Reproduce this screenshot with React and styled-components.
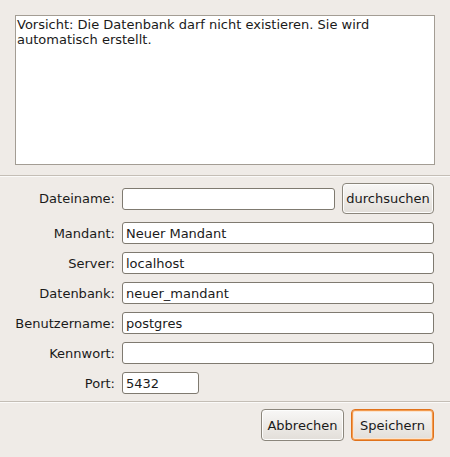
import React from 'react';
import styled, { createGlobalStyle } from 'styled-components';

const bg = '#efebe7';
const text = '#1a1a1a';

const GlobalStyle = createGlobalStyle`
  body {
    margin: 0;
    background: ${bg};
    font-family: "DejaVu Sans", "Liberation Sans", sans-serif;
    font-size: 13px;
    color: ${text};
  }
`;

const fields = [
  { label: 'Mandant:', value: 'Neuer Mandant' },
  { label: 'Server:', value: 'localhost' },
  { label: 'Datenbank:', value: 'neuer_mandant' },
  { label: 'Benutzername:', value: 'postgres' },
  { label: 'Kennwort:', value: '', type: 'password' },
  { label: 'Port:', value: '5432', short: true },
];

const App = () => {
  return (
    <Dialog>
      <GlobalStyle />
      <Top>
        <Notice
          readOnly
          defaultValue="Vorsicht: Die Datenbank darf nicht existieren. Sie wird automatisch erstellt."
        />
      </Top>
      <Separator />
      <Form>
        <Label>Dateiname:</Label>
        <FileRow>
          <Entry defaultValue="" />
          <Button>durchsuchen</Button>
        </FileRow>
        {fields.map((f) => (
          <React.Fragment key={f.label}>
            <Label>{f.label}</Label>
            <Entry type={f.type || 'text'} defaultValue={f.value} short={f.short} />
          </React.Fragment>
        ))}
      </Form>
      <Separator />
      <Footer>
        <Button wide>Abbrechen</Button>
        <Button wide primary>Speichern</Button>
      </Footer>
    </Dialog>
  );
};

export default App;

const Dialog = styled.div`
  width: 450px;
  height: 457px;
  background: ${bg};
  display: flex;
  flex-direction: column;
`;

const Top = styled.div`
  padding: 15px 15px 10px 15px;
`;

const Notice = styled.textarea`
  display: block;
  box-sizing: border-box;
  width: 420px;
  height: 150px;
  margin: 0;
  padding: 1px 0 0 1px;
  border: 1px solid #a39d94;
  background: #fff;
  resize: none;
  overflow: hidden;
  outline: none;
  font-family: inherit;
  font-size: 13px;
  line-height: 15px;
  color: ${text};
`;

const Separator = styled.div`
  height: 1px;
  background: #c4beb6;
  border-bottom: 1px solid #fbfaf9;
`;

const Form = styled.div`
  display: grid;
  grid-template-columns: 115px 1fr;
  column-gap: 7px;
  row-gap: 8px;
  align-items: center;
  padding: 6px 16px 7px 0;
`;

const Label = styled.div`
  text-align: right;
  white-space: nowrap;
`;

const FileRow = styled.div`
  display: flex;
  align-items: center;
  gap: 7px;
`;

const Entry = styled.input`
  box-sizing: border-box;
  height: 22px;
  width: ${(p) => (p.short ? '77px' : '100%')};
  flex: ${(p) => (p.short ? 'none' : '1')};
  min-width: 0;
  margin: 0;
  padding: 0 3px;
  border: 1px solid #7f7a70;
  border-radius: 3px;
  background: #fff;
  outline: none;
  font-family: inherit;
  font-size: 13px;
  color: ${text};
`;

const Button = styled.button`
  box-sizing: border-box;
  flex: none;
  width: ${(p) => (p.wide ? '83px' : '92px')};
  height: ${(p) => (p.wide ? '32px' : '31px')};
  margin: 0;
  padding: 0;
  border: 1px solid ${(p) => (p.primary ? '#e0721b' : '#8b867c')};
  border-radius: 4px;
  background: linear-gradient(#f8f7f6, #ebe8e4 60%, #e2ded9);
  box-shadow: ${(p) =>
    p.primary
      ? 'inset 0 0 0 1px #f29a4e, inset 0 0 0 2px #fbe3cc'
      : 'inset 0 0 0 1px #fdfdfc'};
  font-family: inherit;
  font-size: 13px;
  color: ${text};
  cursor: pointer;
`;

const Footer = styled.div`
  display: flex;
  justify-content: flex-end;
  gap: 7px;
  padding: 6px 16px 16px 0;
`;
